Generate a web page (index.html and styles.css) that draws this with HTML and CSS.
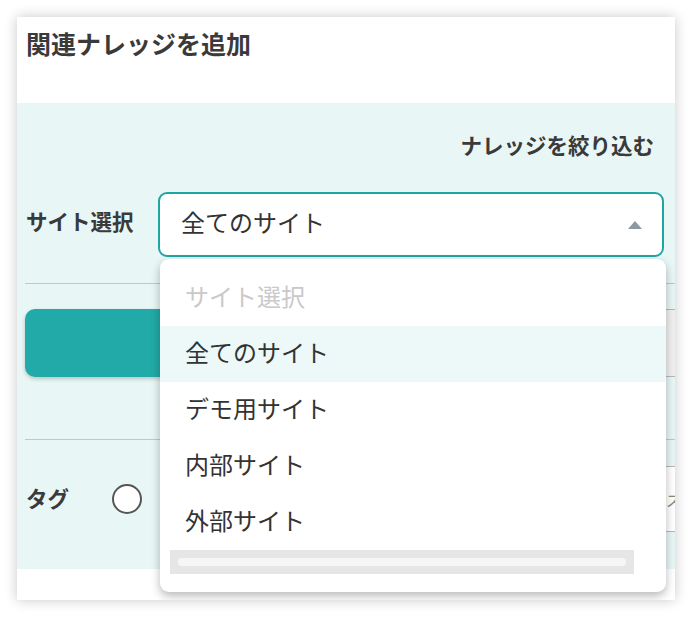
FILE: index.html
```html
<!DOCTYPE html>
<html lang="ja">
<head>
    <meta charset="UTF-8">
    <meta name="viewport" content="width=device-width, initial-scale=1.0">
    <title>関連ナレッジを追加</title>
    <link rel="stylesheet" href="styles.css">
</head>
<body>
    <div class="frame">
        <div class="card">
            <div class="card-head">
                <h2>関連ナレッジを追加</h2>
            </div>

            <div class="filter">
                <div class="filter-title">ナレッジを絞り込む</div>

                <div class="site-row">
                    <label class="field-label">サイト選択</label>
                    <div class="select-wrap">
                        <div class="select open">
                            <span class="select-value">全てのサイト</span>
                            <span class="arrow"></span>
                        </div>
                        <ul class="dropdown">
                            <li class="placeholder">サイト選択</li>
                            <li class="selected">全てのサイト</li>
                            <li>デモ用サイト</li>
                            <li>内部サイト</li>
                            <li>外部サイト</li>
                            <li class="scrollbar"><span></span></li>
                        </ul>
                    </div>
                </div>

                <hr class="divider">

                <div class="button-row">
                    <button class="btn-primary"></button>
                    <button class="btn-outline"></button>
                </div>

                <hr class="divider">

                <div class="tag-row">
                    <label class="field-label">タグ</label>
                    <span class="radio"></span>
                    <div class="tag-input"><span>ス</span></div>
                </div>
            </div>
        </div>
    </div>
</body>
</html>
```

FILE: styles.css
```css
* {
    margin: 0;
    padding: 0;
    box-sizing: border-box;
}

body {
    font-family: "Noto Sans CJK JP", "Noto Sans", sans-serif;
    background: #fff;
    color: #333;
}

.frame {
    padding: 17px;
    width: 692px;
    height: 617px;
}

.card {
    position: relative;
    height: 583px;
    background: #fff;
    box-shadow: 0 0 12px rgba(0, 0, 0, 0.22);
    overflow: hidden;
}

.card-head {
    height: 86px;
    padding: 9px 9px 0;
}

.card-head h2 {
    font-size: 25px;
    line-height: 34px;
    font-weight: 700;
    color: #3a3a3a;
}

.filter {
    background: #e8f6f6;
    height: 466px;
    padding-top: 27px;
}

.filter-title {
    text-align: right;
    padding-right: 21px;
    font-size: 21.5px;
    font-weight: 700;
    line-height: 30px;
    color: #3a3a3a;
}

.field-label {
    flex-shrink: 0;
    font-size: 21.5px;
    font-weight: 700;
    color: #3a3a3a;
    padding-bottom: 8px;
}

.site-row {
    display: flex;
    align-items: center;
    margin-top: 32px;
    padding-left: 9px;
}

.site-row .field-label {
    width: 132px;
}

.select-wrap {
    position: relative;
    flex-shrink: 0;
    width: 506px;
}

.select {
    height: 65px;
    border: 2px solid #1fa6a3;
    border-radius: 9px;
    background: #fff;
    display: flex;
    align-items: center;
    justify-content: space-between;
    padding: 0 20px 0 21px;
    font-size: 24px;
    color: #333;
}

.select-value {
    padding-bottom: 7px;
}

.arrow {
    width: 0;
    height: 0;
    border-left: 7.5px solid transparent;
    border-right: 7.5px solid transparent;
    border-bottom: 8px solid #8a99a6;
}

.dropdown {
    position: absolute;
    top: 67px;
    left: 2px;
    width: 506px;
    height: 333px;
    list-style: none;
    background: #fff;
    border-radius: 9px;
    box-shadow: 0 4px 10px rgba(0, 0, 0, 0.28);
    padding-top: 11px;
    z-index: 10;
}

.dropdown li {
    height: 56px;
    line-height: 52px;
    padding-left: 25px;
    font-size: 24px;
    color: #333;
}

.dropdown li.placeholder {
    color: #c9c9c9;
}

.dropdown li.selected {
    background: #edf8f8;
}

.dropdown li.scrollbar {
    height: 24px;
    margin: 0 32px 0 10px;
    padding: 8px 8px;
    background: #e6e6e6;
}

.scrollbar span {
    display: block;
    height: 8px;
    border-radius: 4px;
    background: #f6f6f6;
}

.divider {
    border: none;
    border-top: 1px solid #c6c6c6;
    margin-left: 8px;
}

.site-row + .divider {
    margin-top: 26px;
}

.button-row {
    display: flex;
    margin-top: 25px;
    padding-left: 8px;
    gap: 20px;
}

.btn-primary {
    flex-shrink: 0;
    width: 400px;
    height: 68px;
    border: none;
    border-radius: 10px;
    background: #21aaa7;
    box-shadow: 0 2px 4px rgba(0, 0, 0, 0.2);
}

.btn-outline {
    flex-shrink: 0;
    width: 300px;
    height: 68px;
    border: 1px solid #b8b8b8;
    border-radius: 10px;
    background: #f0f0f0;
}

.button-row + .divider {
    margin-top: 62px;
}

.tag-row {
    display: flex;
    align-items: center;
    margin-top: 26px;
    padding-left: 9px;
    height: 66px;
}

.tag-row .field-label {
    width: 86px;
    padding-bottom: 4px;
}

.radio {
    flex-shrink: 0;
    width: 30px;
    height: 30px;
    border: 2px solid #555;
    border-radius: 50%;
    background: #fff;
}

.tag-input {
    flex-shrink: 0;
    margin-left: 60px;
    width: 500px;
    height: 66px;
    border: 1px solid #b8b8b8;
    background: #fff;
    display: flex;
    align-items: center;
    padding-left: 463px;
    font-size: 15px;
    color: #888;
}
```
